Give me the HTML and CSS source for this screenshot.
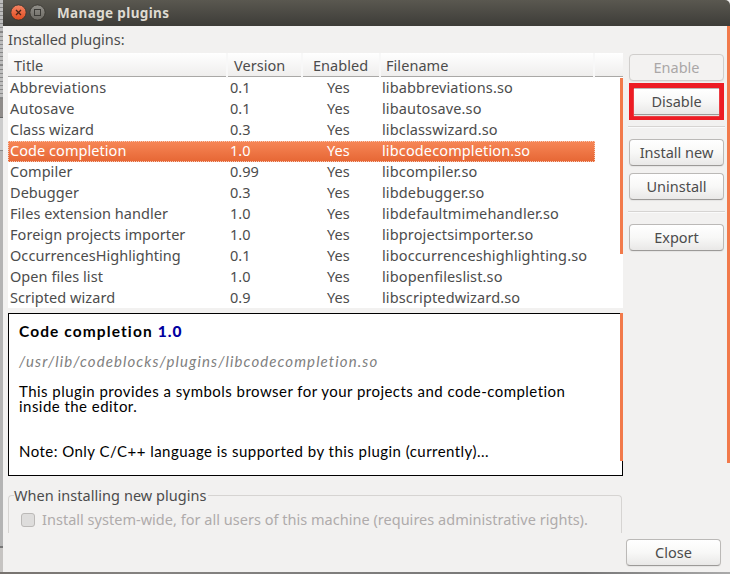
FILE: index.html
```
<!DOCTYPE html>
<html lang="en">
<head>
<meta charset="utf-8">
<title>Manage plugins</title>
<link rel="stylesheet" href="styles.css">
</head>
<body>
<div class="desktop">
  <div class="backdrop">
    <i class="grip g1"></i><i class="grip g2"></i><i class="grip g3"></i><i class="notch"></i><i class="frame"></i><i class="foot"></i>
  </div>
  <main class="window">
    <header class="titlebar">
      <svg class="controls" width="40" height="26" viewBox="0 0 40 26">
        <defs>
          <linearGradient id="red" x1="0" y1="0" x2="0" y2="1"><stop offset="0" stop-color="#f58565"/><stop offset="1" stop-color="#df4b1f"/></linearGradient>
          <linearGradient id="grey" x1="0" y1="0" x2="0" y2="1"><stop offset="0" stop-color="#92908a"/><stop offset="1" stop-color="#6b6963"/></linearGradient>
        </defs>
        <circle cx="10.5" cy="12.5" r="7.6" fill="url(#red)" stroke="#37352f" stroke-width=".8"/>
        <path d="M8 10l5 5M13 10l-5 5" stroke="#482418" stroke-width="1.3"/>
        <circle cx="29.5" cy="12.5" r="7.6" fill="url(#grey)" stroke="#37352f" stroke-width=".8"/>
        <rect x="26.5" y="9.5" width="6" height="6" fill="none" stroke="#3c3b37"/>
      </svg>
      <h1>Manage plugins</h1>
    </header>
    <div class="content">
      <section class="left">
        <div class="caption"><span>Installed plugins:</span></div>
        <div class="list">
          <div class="head"><span>Title</span><span>Version</span><span>Enabled</span><span>Filename</span><span></span></div>
          <div class="rows">
            <div class="row"><span class="wide">Abbreviations</span><span>0.1</span><span>Yes</span><span>libabbreviations.so</span></div>
            <div class="row"><span class="wide">Autosave</span><span>0.1</span><span>Yes</span><span>libautosave.so</span></div>
            <div class="row"><span>Class wizard</span><span>0.3</span><span>Yes</span><span>libclasswizard.so</span></div>
            <div class="row selected"><span>Code completion</span><span>1.0</span><span>Yes</span><span>libcodecompletion.so</span></div>
            <div class="row"><span>Compiler</span><span>0.99</span><span>Yes</span><span>libcompiler.so</span></div>
            <div class="row"><span>Debugger</span><span>0.3</span><span>Yes</span><span>libdebugger.so</span></div>
            <div class="row"><span>Files extension handler</span><span>1.0</span><span>Yes</span><span>libdefaultmimehandler.so</span></div>
            <div class="row"><span>Foreign projects importer</span><span>1.0</span><span>Yes</span><span>libprojectsimporter.so</span></div>
            <div class="row"><span>OccurrencesHighlighting</span><span>0.1</span><span>Yes</span><span>liboccurrenceshighlighting.so</span></div>
            <div class="row"><span>Open files list</span><span>1.0</span><span>Yes</span><span>libopenfileslist.so</span></div>
            <div class="row"><span>Scripted wizard</span><span>0.9</span><span>Yes</span><span>libscriptedwizard.so</span></div>
            <i class="scroll"></i>
          </div>
        </div>
        <article class="details">
          <h2>Code completion <b>1.0</b></h2>
          <p class="path">/usr/lib/codeblocks/plugins/libcodecompletion.so</p>
          <p class="about">This plugin provides a symbols browser for your projects and code-completion<br>inside the editor.</p>
          <p class="note">Note: Only C/C++ language is supported by this plugin (currently)...</p>
          <i class="scroll"></i>
        </article>
        <div class="options">
          <div class="legend"><span>When installing new plugins</span></div>
          <label class="check"><i></i><span>Install system-wide, for all users of this machine (requires administrative rights).</span></label>
        </div>
      </section>
      <aside class="right">
        <button class="btn off" disabled>Enable</button>
        <div class="marked"><button class="btn">Disable</button></div>
        <hr>
        <button class="btn">Install new</button>
        <button class="btn next">Uninstall</button>
        <hr>
        <button class="btn">Export</button>
        <button class="btn close">Close</button>
      </aside>
      <i class="scroll edge"></i>
    </div>
  </main>
</div>
</body>
</html>
```
FILE: styles.css
```
* { box-sizing: border-box; }
body { margin: 0; width: 730px; height: 574px; overflow: hidden; font: 14.5px/21px "Noto Sans", sans-serif; color: #4c4c4c; }
.desktop { display: flex; width: 730px; height: 574px; background: linear-gradient(90deg, #77736f, #858381 20%, #777 80%, #aaa); padding-bottom: 2px; }
.backdrop { width: 3px; display: flex; flex-direction: column; background: #b4b4b4; }
.grip { height: 33px; background: repeating-linear-gradient(#bcbcbc 0 3px, #888 3px 4px); border-bottom: 1px solid #858585; }
.notch { height: 19px; background: #8f8c8a; border-bottom: 1px solid #666; }
.frame { height: 33px; background: #ccc; border-bottom: 1px solid #888; }
.foot { margin-top: auto; height: 26px; background: #c6c4c2; border-top: 2px solid #777; }
.window { width: 727px; height: 572px; background: #f2f1f0; }
.titlebar { height: 26px; display: flex; align-items: center; background: linear-gradient(#5a5850, #3d3c38); padding-left: 5px; border-radius: 0 5px 0 0; }
.controls { display: block; }
h1 { margin: 0 0 0 9px; font: bold 13.5px/24px "Noto Sans", sans-serif; letter-spacing: .37px; color: #dfdbd2; white-space: nowrap; }
.content { position: relative; display: flex; height: 546px; padding-left: 5px; }
.left { width: 615px; }
.caption { height: 27px; line-height: 27px; white-space: nowrap; }
.list { height: 255px; background: #fff; }
.head, .row { display: grid; grid-template-columns: 220px 75px 78px 214px 28px; white-space: nowrap; }
.head { height: 24px; background: linear-gradient(#fff, #efeeed); border-bottom: 1px solid #a9a8a6; line-height: 25px; letter-spacing: .05px; }
.head span { padding-left: 6px; border-right: 2px solid #f8f8f8; }
.head span:nth-child(3) { padding-left: 10px; }
.head span:nth-child(4) { padding-left: 5px; }
.head span:last-child { border: 0; }
.rows { position: relative; padding-top: 1px; }
.row { height: 21px; width: 587px; grid-template-columns: 220px 75px 77px 215px; line-height: 19px; letter-spacing: .05px; }
.row span { padding-left: 2px; }
.row .wide { letter-spacing: .22px; }
.row span:nth-child(3) { padding-left: 24px; }
.row span:nth-child(4) { letter-spacing: .13px; }
.selected { background: linear-gradient(#f78757, #e66634); color: #fff; outline: 1px dotted #f6cbb9; outline-offset: -1px; }
.scroll { position: absolute; right: 0; top: 1px; width: 3px; height: 176px; background: #f27a4b; }
.details { position: relative; height: 163px; margin-top: 5px; border: 1px solid #000; background: #fff; color: #000; padding: 7px 10px 0; font: 15px/15px Lato, sans-serif; letter-spacing: .46px; font-variant-ligatures: none; white-space: nowrap; }
.details .scroll { top: -1px; right: -1px; height: 148px; }
h2 { margin: 0; font: bold 15.5px/21px Lato, sans-serif; letter-spacing: 1.1px; }
h2 b { color: #0000a0; }
.details p { margin: 0; }
.details .path { margin-top: 12px; color: #808080; font-style: italic; letter-spacing: 1.1px; }
.details .about { margin-top: 15px; }
.details .note { margin-top: 30px; }
.options { height: 57px; padding-top: 8px; }
.legend { display: flex; height: 22px; line-height: 22px; white-space: nowrap; letter-spacing: .04px; }
.legend::before { content: ""; width: 5px; margin-top: 11px; border-top: 1px solid #d6d4d2; border-left: 1px solid #d6d4d2; border-radius: 4px 0 0 0; }
.legend::after { content: ""; flex: 1; margin: 11px 1px 0 1px; border-top: 1px solid #d6d4d2; border-right: 1px solid #d6d4d2; border-radius: 0 4px 0 0; }
.check { display: flex; align-items: center; height: 27px; width: 614px; padding-left: 12px; border: solid #d6d4d2; border-width: 0 1px; color: #afabab; white-space: nowrap; letter-spacing: .02px; }
.check i { width: 14px; height: 14px; border: 1px solid #bbb9b7; border-radius: 3px; background: #dedddc; margin-right: 7px; }
.right { width: 95px; height: 546px; margin-left: 6px; padding-top: 28px; display: flex; flex-direction: column; }
.btn { display: block; flex: none; width: 95px; height: 27px; padding: 0 0 1px; border: 1px solid #bbb9b7; border-bottom-color: #9c9a98; border-radius: 4px; background: linear-gradient(#fff, #f8f8f7 50%, #e9e8e7); color: #4c4c4c; font: 14.5px/23px "Noto Sans", sans-serif; white-space: nowrap; box-shadow: 0 1px 1px #e5e4e3; }
.off { color: #aaa7a7; background: #f3f2f1; border-color: #d0cecc; }
.marked { height: 37px; margin: 2px 0 6px; border: 5px solid #ed1c24; }
.marked .btn { width: 85px; border-width: 1px 0; border-radius: 0; }
hr { width: 97px; height: 2px; margin: 0 0 11px -1px; border: 0; border-top: 1px solid #d6d4d2; border-bottom: 1px solid #fafafa; flex: none; }
.next { margin: 7px 0 11px; }
.close { margin: auto 0 6px -3px; }
.edge { top: 0; height: 437px; }
```
